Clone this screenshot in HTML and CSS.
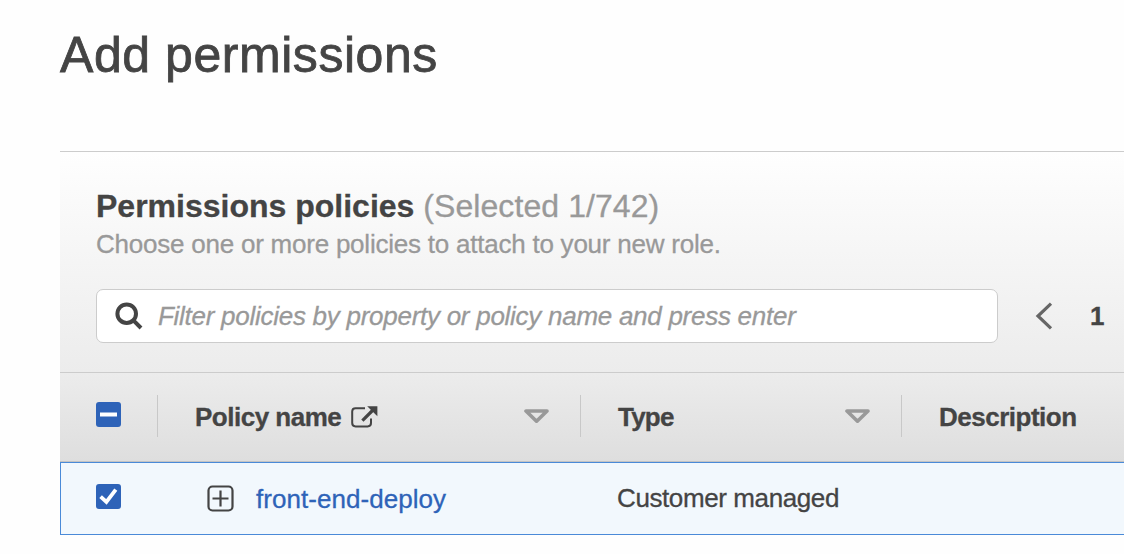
FILE: index.html
```html
<!DOCTYPE html>
<html lang="en">
<head>
<meta charset="utf-8">
<title>Add permissions</title>
<link rel="stylesheet" href="styles.css">
</head>
<body>
<main class="page">
  <h1 class="page-title">Add permissions</h1>
  <section class="panel">
    <header class="panel-head">
      <h2 class="panel-title"><span class="panel-name">Permissions policies</span> <span class="count">(Selected 1/742)</span></h2>
      <p class="hint">Choose one or more policies to attach to your new role.</p>
      <div class="toolbar">
        <div class="search">
          <svg class="search-icon" width="28" height="28" viewBox="0 0 28 28"><circle cx="11.7" cy="11.7" r="9.3"/><path d="M18.4 18.4L26 26"/></svg>
          <span class="placeholder">Filter policies by property or policy name and press enter</span>
        </div>
        <svg class="prev" width="18" height="28" viewBox="0 0 18 28"><path d="M16 1.6L3 14L16 26.4"/></svg>
        <span class="page-number">1</span>
      </div>
    </header>
    <div class="table">
      <div class="row row-head">
        <div class="cell cell-check">
          <svg class="checkbox" width="25" height="25" viewBox="0 0 25 25"><rect class="box" width="25" height="25" rx="3"/><path class="mark-dash" d="M4 12.5H21"/></svg>
        </div>
        <div class="cell">
          <span class="label label-name">Policy name</span>
          <svg class="external" width="27" height="22" viewBox="0 0 27 22"><path class="ext-frame" d="M14 2.2H4.6Q1.2 2.2 1.2 5.6V17Q1.2 20.4 4.6 20.4H16.6Q20 20.4 20 17V12.5"/><path class="ext-shaft" d="M11.4 14.6L22 4"/><path class="ext-head" d="M16.2 .2H26.4V10.2Z"/></svg>
          <svg class="sort" width="25" height="15" viewBox="0 0 25 15"><path d="M2 2H23L12.5 12.2Z"/></svg>
        </div>
        <div class="cell">
          <span class="label label-type">Type</span>
          <svg class="sort" width="25" height="15" viewBox="0 0 25 15"><path d="M2 2H23L12.5 12.2Z"/></svg>
        </div>
        <div class="cell cell-last"><span class="label label-desc">Description</span></div>
      </div>
      <div class="row row-selected">
        <div class="cell cell-check">
          <svg class="checkbox" width="25" height="25" viewBox="0 0 25 25"><rect class="box" width="25" height="25" rx="3"/><path class="mark-check" d="M4.6 12.6L10.4 18L19.8 5.6"/></svg>
        </div>
        <div class="cell cell-policy">
          <svg class="expand" width="27" height="27" viewBox="0 0 27 27"><rect x="1.5" y="1.5" width="24" height="24" rx="4"/><path d="M5.5 13.5H21.5M13.5 5.5V21.5"/></svg>
          <a class="policy-link">front-end-deploy</a>
        </div>
        <div class="cell cell-type"><span class="type-text">Customer managed</span></div>
        <div class="cell cell-last"></div>
      </div>
    </div>
  </section>
</main>
</body>
</html>
```
FILE: styles.css
```css
* { box-sizing: border-box; }

body {
  margin: 0;
  height: 554px;
  overflow: hidden;
  background: #fefefe;
  color: #444;
  font: 26px/38px "Liberation Sans", Arial, sans-serif;
  -webkit-text-stroke: .3px currentColor;
}

svg { display: block; flex: none; fill: none; }

.page { padding: 25px 0 0 60px; }

.page-title {
  margin: 0 0 66px;
  font-size: 50px;
  line-height: 60px;
  letter-spacing: .55px;
  font-weight: 400;
  white-space: nowrap;
  -webkit-text-stroke: .8px #444;
}

.panel { border-top: 1px solid #ccc; }

.panel-head {
  height: 220px;
  padding: 35px 0 0 36px;
  background: linear-gradient(#fefefe, #ececec);
}

.panel-title { margin: 0; font-size: 32px; line-height: 38px; white-space: nowrap; }
.count { font-weight: 400; color: #999; letter-spacing: .08px; -webkit-text-stroke: .3px #999; }
.hint { margin: 0; color: #999; white-space: nowrap; letter-spacing: -.23px; -webkit-text-stroke: .3px #999; }

.toolbar { display: flex; align-items: center; margin-top: 26px; }

.search {
  display: flex;
  align-items: center;
  width: 902px;
  height: 54px;
  padding-left: 18px;
  border: 1px solid #ccc;
  border-radius: 7px;
  background: #fff;
}

.search-icon { stroke: #444; stroke-width: 4; }
.placeholder {
  margin-left: 15px;
  color: #999;
  font-style: italic;
  white-space: nowrap;
  letter-spacing: -.27px;
  -webkit-text-stroke: .3px #999;
}
.prev { margin-left: 37px; stroke: #666; stroke-width: 3.2; }
.page-number { margin-left: 37px; font-weight: 700; }

.row { display: grid; grid-template-columns: 98px 423px 321px 1fr; }

.row-head {
  height: 90px;
  border-top: 1px solid #ccc;
  border-bottom: 1px solid #c4c4c4;
  background: linear-gradient(#ececec, #dedede);
  font-weight: 700;
}

.row-head .cell {
  height: 42px;
  margin-top: 22px;
  padding-left: 37px;
  border-right: 1px solid #c8c8c8;
}

.row-head .cell-last { border-right: 0; }
.cell { display: flex; align-items: center; white-space: nowrap; }
.label { padding-top: 2px; letter-spacing: -.5px; }
.label-type { letter-spacing: -.8px; }
.row-head .cell-check { padding-left: 36px; }
.checkbox { margin-top: -3px; }
.box { fill: #2e63b8; }
.mark-dash { stroke: #fff; stroke-width: 4; }
.mark-check { stroke: #fff; stroke-width: 3.8; }

.external { margin: 2px 0 0 10px; stroke: #444; }
.ext-frame { stroke-width: 2; }
.ext-shaft { stroke-width: 3.2; }
.ext-head { fill: #444; stroke: none; }

.sort { margin-left: auto; margin-right: 31px; stroke: #999; stroke-width: 3.6; stroke-linejoin: round; }

.row-selected {
  height: 73px;
  border: 1px solid #4a8ad8;
  border-right: 0;
  background: #f2f8fd;
}

.row-selected .cell-check { padding-left: 35px; }
.row-selected .checkbox { margin-top: -4px; }
.cell-policy { padding-left: 48px; }
.expand { stroke: #444; stroke-width: 2.2; }
.policy-link {
  margin-left: 22px;
  padding-top: 1px;
  color: #2e63b8;
  letter-spacing: .05px;
  -webkit-text-stroke: .3px #2e63b8;
}
.cell-type { padding-left: 35px; }
.type-text { padding-bottom: 1px; letter-spacing: -.4px; }
```
